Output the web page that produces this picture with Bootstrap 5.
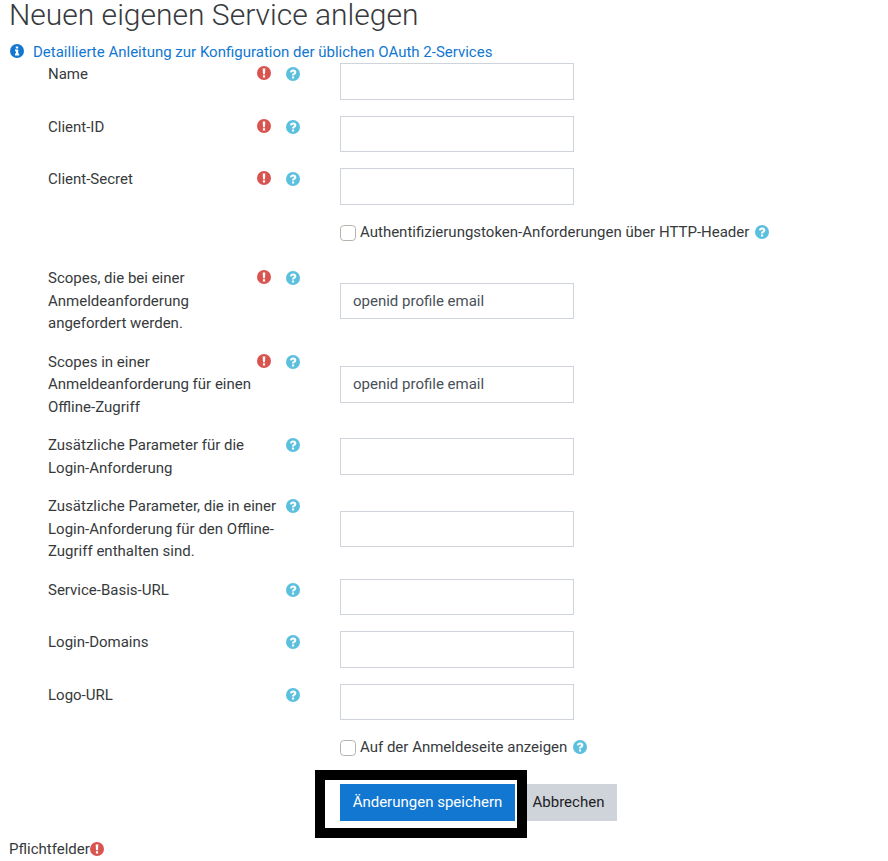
<!DOCTYPE html>
<html lang="de">
<head>
<meta charset="utf-8">
<title>Neuen eigenen Service anlegen</title>
<link href="https://cdn.jsdelivr.net/npm/bootstrap@5.3.0/dist/css/bootstrap.min.css" rel="stylesheet">
<style>
html,body{height:861px;overflow:hidden}
body{font-family:Roboto,"Liberation Sans",sans-serif;font-size:15px;line-height:22.5px;color:#373a3c;background:#fff}
.pg-title{font-family:Roboto,sans-serif;font-weight:300;font-size:30px;line-height:30px;color:#373a3c;margin:0 0 11px 9px}
.doc-link{display:flex;align-items:flex-start;margin-left:10px;color:#1177d1;text-decoration:none;height:22px}
.doc-link svg{margin:3px 9px 0 0}
.form-line{padding-left:48px}
.lab-col{width:292px;flex:none;padding-right:40px;align-self:flex-start}
.lab-text{flex:1 1 0;min-width:0}
.ico-req{width:14px;height:14px;margin:3px 9px 0 4px;flex:none}
.ico-help{width:14px;height:14px;margin:4px 0 0 6px;flex:none}
.fld{width:234px;flex:none;height:36.5px;border:1px solid #ced4da;border-radius:0;padding:6px 12px;font-size:15px;line-height:22.5px;color:#495057}
.chk-line{margin-left:340px;height:30.5px;align-items:flex-start}
.chk-box{width:16px;height:16px;margin:4px 4px 0 0;border:1px solid #b8b3ad;border-radius:3px;flex:none}
.chk-line .ico-help{margin-left:6px}
.btn-line{padding-left:340px;height:37px;margin-top:17.5px}
.btn-save,.btn-stop{border-radius:0;border:1px solid;font-size:15px;line-height:22.5px;padding:6px 12px;height:37px}
.btn-save{background:#1177d1;border-color:#1177d1;color:#fff;width:175px;position:relative;z-index:1;padding:6px 0}
.btn-stop{background:#ced4da;border-color:#ced4da;color:#1d2125;width:97px;margin-left:5px;padding:6px 0}
.mark-wrap{position:relative;z-index:1;display:inline-block;line-height:0}
.mark-wrap::before{content:"";position:absolute;left:-25px;right:-12px;top:-14px;bottom:-17px;background:#fff;border:10px solid #000;z-index:0}
.req-note{margin:17px 0 0 9px;display:flex;align-items:flex-start}
.req-note svg{margin:4px 0 0 0}
</style>
</head>
<body>
<svg width="0" height="0" class="position-absolute">
<defs>
<symbol id="i-req" viewBox="0 0 14 14"><circle cx="7" cy="7" r="7" fill="#d9534f"/><path d="M5.7 2.6h2.6l-.3 5.6H6zM5.9 9.3h2.2v2.2H5.9z" fill="#fff"/></symbol>
<symbol id="i-help" viewBox="0 0 14 14"><circle cx="7" cy="7" r="7" fill="#5bc0de"/><path d="M3.9 5.3C4.2 3.6 5.4 2.6 7.2 2.6c1.8 0 3.1 1.1 3.1 2.6 0 1.2-.7 1.8-1.5 2.3-.6.4-.8.6-.8 1.1H6c0-1.2.4-1.8 1.2-2.3.6-.4 1-.6 1-1.1 0-.5-.4-.8-1-.8-.7 0-1.1.4-1.3 1.1zM6 9.4h2.1v2H6z" fill="#fff"/></symbol>
<symbol id="i-info" viewBox="0 0 14 14"><circle cx="7" cy="7" r="7" fill="#1177d1"/><path d="M5.8 2.4h2.4v2H5.8zM5 5.4h3.2v4.2h.9v1.9H5V9.6h.9V7.3H5z" fill="#fff"/></symbol>
</defs>
</svg>

<h2 class="pg-title">Neuen eigenen Service anlegen</h2>
<a class="doc-link" href="#"><svg width="14" height="14"><use href="#i-info"/></svg>Detaillierte Anleitung zur Konfiguration der üblichen OAuth 2-Services</a>

<form>
<div class="form-line d-flex align-items-center mb-3">
  <div class="lab-col d-flex"><label class="lab-text">Name</label><svg class="ico-req"><use href="#i-req"/></svg><svg class="ico-help"><use href="#i-help"/></svg></div>
  <input class="form-control fld" type="text">
</div>
<div class="form-line d-flex align-items-center mb-3">
  <div class="lab-col d-flex"><label class="lab-text">Client-ID</label><svg class="ico-req"><use href="#i-req"/></svg><svg class="ico-help"><use href="#i-help"/></svg></div>
  <input class="form-control fld" type="text">
</div>
<div class="form-line d-flex align-items-center mb-3">
  <div class="lab-col d-flex"><label class="lab-text">Client-Secret</label><svg class="ico-req"><use href="#i-req"/></svg><svg class="ico-help"><use href="#i-help"/></svg></div>
  <input class="form-control fld" type="text">
</div>
<div class="chk-line d-flex mb-3">
  <input class="form-check-input chk-box" type="checkbox"><label>Authentifizierungstoken-Anforderungen über HTTP-Header</label><svg class="ico-help"><use href="#i-help"/></svg>
</div>
<div class="form-line d-flex align-items-center mb-3">
  <div class="lab-col d-flex"><label class="lab-text">Scopes, die bei einer Anmeldeanforderung angefordert werden.</label><svg class="ico-req"><use href="#i-req"/></svg><svg class="ico-help"><use href="#i-help"/></svg></div>
  <input class="form-control fld" type="text" value="openid profile email">
</div>
<div class="form-line d-flex align-items-center mb-3">
  <div class="lab-col d-flex"><label class="lab-text">Scopes in einer Anmeldeanforderung für einen Offline-Zugriff</label><svg class="ico-req"><use href="#i-req"/></svg><svg class="ico-help"><use href="#i-help"/></svg></div>
  <input class="form-control fld" type="text" value="openid profile email">
</div>
<div class="form-line d-flex align-items-center mb-3">
  <div class="lab-col d-flex"><label class="lab-text">Zusätzliche Parameter für die Login-Anforderung</label><svg class="ico-help"><use href="#i-help"/></svg></div>
  <input class="form-control fld" type="text">
</div>
<div class="form-line d-flex align-items-center mb-3">
  <div class="lab-col d-flex"><label class="lab-text">Zusätzliche Parameter, die in einer Login-Anforderung für den Offline-Zugriff enthalten sind.</label><svg class="ico-help"><use href="#i-help"/></svg></div>
  <input class="form-control fld" type="text">
</div>
<div class="form-line d-flex align-items-center mb-3">
  <div class="lab-col d-flex"><label class="lab-text">Service-Basis-URL</label><svg class="ico-help"><use href="#i-help"/></svg></div>
  <input class="form-control fld" type="text">
</div>
<div class="form-line d-flex align-items-center mb-3">
  <div class="lab-col d-flex"><label class="lab-text">Login-Domains</label><svg class="ico-help"><use href="#i-help"/></svg></div>
  <input class="form-control fld" type="text">
</div>
<div class="form-line d-flex align-items-center mb-3">
  <div class="lab-col d-flex"><label class="lab-text">Logo-URL</label><svg class="ico-help"><use href="#i-help"/></svg></div>
  <input class="form-control fld" type="text">
</div>
<div class="chk-line d-flex">
  <input class="form-check-input chk-box" type="checkbox"><label>Auf der Anmeldeseite anzeigen</label><svg class="ico-help"><use href="#i-help"/></svg>
</div>
<div class="btn-line d-flex">
  <span class="mark-wrap"><button type="button" class="btn btn-save">Änderungen speichern</button></span>
  <button type="button" class="btn btn-stop">Abbrechen</button>
</div>
<div class="req-note">Pflichtfelder<svg width="14" height="14"><use href="#i-req"/></svg></div>
</form>
<script src="https://cdn.jsdelivr.net/npm/bootstrap@5.3.0/dist/js/bootstrap.bundle.min.js"></script>
</body>
</html>
